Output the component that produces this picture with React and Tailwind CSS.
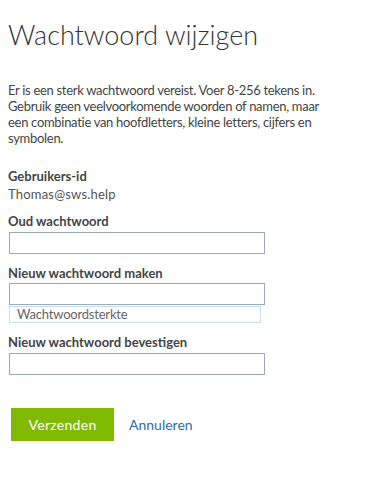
import React from 'react';

const font = { fontFamily: '"Segoe UI", Lato, "Open Sans", sans-serif' };

const Field = ({ label, children }) => (
  <div className="mt-[10px]">
    <div className="text-[13px] font-bold leading-[18px] text-[#444]">{label}</div>
    {children}
  </div>
);

const Input = () => (
  <input
    type="password"
    className="ml-px mt-[1.5px] block h-[22px] w-[256px] border border-[#98aabb] bg-white outline-none"
  />
);

export default function App() {
  return (
    <div className="min-h-[485px] bg-white px-[8px] pt-[17px] text-[#444]" style={font}>
      <h1 className="text-[27px] font-light leading-[36px] text-[#333]">Wachtwoord wijzigen</h1>

      <p className="mt-[29px] w-[326px] text-[13px] leading-[16px] tracking-[-0.3px]">
        Er is een sterk wachtwoord vereist. Voer 8-256 tekens in. Gebruik geen veelvoorkomende woorden of namen, maar
        een combinatie van hoofdletters, kleine letters, cijfers en symbolen.
      </p>

      <div className="mt-[21px]">
        <div className="text-[13px] font-bold leading-[18px]">Gebruikers-id</div>
        <div className="text-[13px] leading-[18px] tracking-[0.2px] text-[#555]">Thomas@sws.help</div>
      </div>

      <div className="mt-[-1px]">
        <Field label="Oud wachtwoord">
          <Input />
        </Field>
      </div>

      <Field label="Nieuw wachtwoord maken">
        <Input />
        <div className="ml-px mt-px h-[17px] w-[252px] border border-[#c8ddef] pl-[7px] text-[13px] leading-[15px] tracking-[-0.2px] text-[#666]">
          Wachtwoordsterkte
        </div>
      </Field>

      <Field label="Nieuw wachtwoord bevestigen">
        <Input />
      </Field>

      <div className="mt-[33px] flex items-center gap-[15px] pl-[3px]">
        <button className="h-[33px] w-[103px] bg-[#7fba00] text-[14px] tracking-[0.3px] text-white">Verzenden</button>
        <a href="#" className="text-[14px] text-[#2e6da4]">Annuleren</a>
      </div>
    </div>
  );
}
